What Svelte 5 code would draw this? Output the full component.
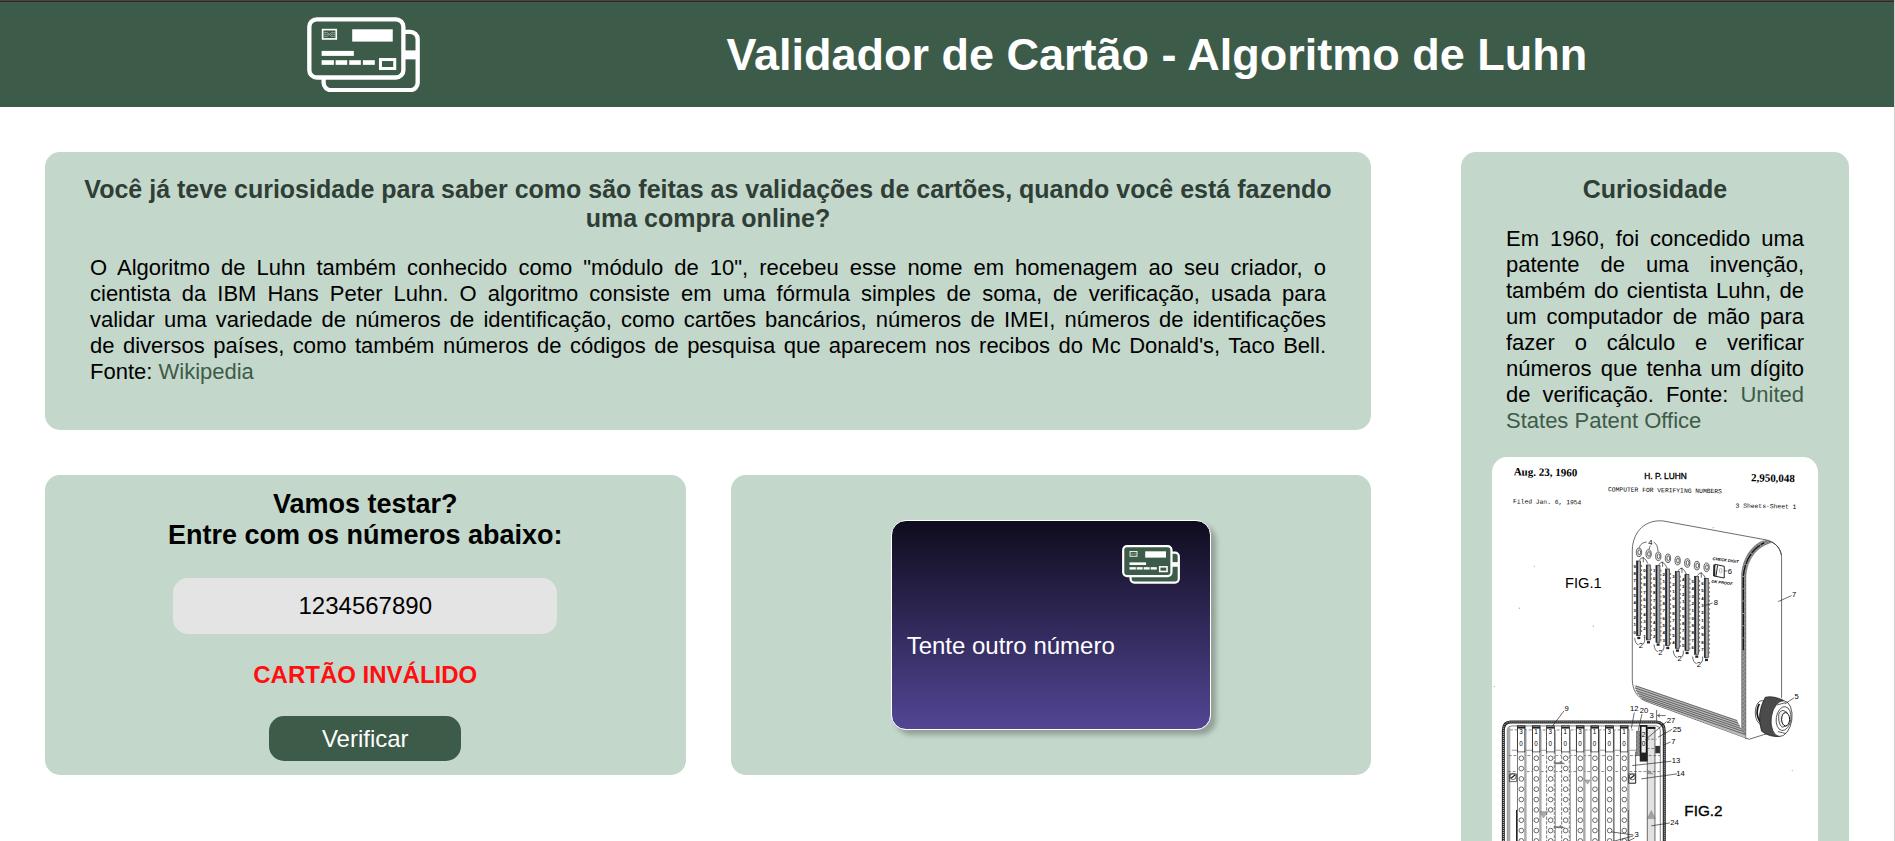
<script>
  let number = $state('1234567890');
  let valid = $state(false);

  function luhn(value) {
    const digits = value.replace(/\D/g, '').split('').reverse().map(Number);
    if (digits.length < 13) return false;
    const sum = digits.reduce((acc, d, i) => {
      if (i % 2 === 0) return acc + d;
      return acc + (d * 2 > 9 ? d * 2 - 9 : d * 2);
    }, 0);
    return sum % 10 === 0;
  }

  function verify(event) {
    event.preventDefault();
    valid = luhn(number);
  }

  // Fig. 1: digit sliders, each with its dial, top and bottom
  const sliders = [
    { x: 476, dial: 307, top: 333, end: 557 },
    { x: 505, dial: 312, top: 345, end: 570 },
    { x: 534, dial: 319, top: 347, end: 577 },
    { x: 563, dial: 325, top: 357, end: 587 },
    { x: 592, dial: 332, top: 365, end: 595 },
    { x: 621, dial: 339, top: 373, end: 602 },
    { x: 650, dial: 347, top: 379, end: 613 },
    { x: 679, dial: 352, top: 385, end: 623 }
  ];
  const scale = [0, 1, 2, 3, 4, 5, 6, 7, 8, 9];
  const pairs = [0, 2, 4, 6];

  // Fig. 2: strips and their holes
  const strips = [123, 168, 211, 256, 300, 344, 388, 432];
  const holes = Array.from({ length: 14 }, (_, i) => 925 + i * 31);

  const labels = [
    [511, 284, '4'], [750, 371, '6'], [708, 466, '8'], [943, 442, '7'],
    [950, 747, '5'], [260, 782, '9'], [463, 783, '12'], [492, 790, '20'],
    [515, 804, '3'], [573, 820, '27'], [591, 847, '25'], [580, 881, '7'],
    [588, 938, '13'], [602, 979, '14'], [584, 1126, '24'], [470, 1161, '3']
  ];
</script>

{#snippet cards(cls)}
  <svg class={cls} viewBox="48 50 340 227" aria-hidden="true">
    <g fill="#3d5b49" stroke="#fff" stroke-width="13">
      <rect x="98" y="95" width="283" height="175" rx="22" />
      <path d="M338 164H382" stroke-width="27" />
      <rect x="55" y="57" width="283" height="175" rx="22" />
    </g>
    <g fill="#fff">
      <rect x="184" y="87" width="122" height="37" />
      <rect x="92" y="152" width="97" height="15" />
      <rect x="92" y="180" width="37" height="14" />
      <rect x="134" y="180" width="35" height="14" />
      <rect x="175" y="180" width="35" height="14" />
      <rect x="216" y="180" width="36" height="14" />
    </g>
    <g fill="none" stroke="#fff">
      <rect x="95" y="88" width="41" height="28" stroke-width="5" />
      <rect x="269" y="178" width="43" height="27" stroke-width="9" />
      <path
        d="M98 97H110L115 102L110 108H98M133 97H121L116 102L121 108H133M98 102H112M119 102H133"
        stroke-width="2"
        opacity="0.6"
      />
    </g>
  </svg>
{/snippet}

<div class="page">
  <header>
    {@render cards('logo')}
    <h1>Validador de Cartão - Algoritmo de Luhn</h1>
  </header>

  <main>
    <div class="content">
      <section class="panel">
        <h2>
          Você já teve curiosidade para saber como são feitas as validações de cartões, quando você está fazendo
          uma compra online?
        </h2>
        <p class="text">
          O Algoritmo de Luhn também conhecido como "módulo de 10", recebeu esse nome em homenagem ao seu
          criador, o cientista&nbsp;da IBM Hans Peter Luhn. O algoritmo consiste em uma fórmula simples de soma, de
          verificação, usada para validar&nbsp;uma variedade de números de identificação, como cartões bancários,
          números de IMEI, números de identificações de&nbsp;diversos países, como também números de códigos de
          pesquisa que aparecem nos recibos do Mc Donald's, Taco Bell. Fonte:&nbsp;<a href="#wikipedia">Wikipedia</a>
        </p>
      </section>

      <div class="row">
        <form class="panel" onsubmit={verify}>
          <label for="number">Vamos testar?<br />Entre com os números abaixo:</label>
          <input id="number" type="text" inputmode="numeric" bind:value={number} />
          <p class="status" class:valid role="status">{valid ? 'CARTÃO VÁLIDO' : 'CARTÃO INVÁLIDO'}</p>
          <button type="submit">Verificar</button>
        </form>

        <section class="panel preview">
          <div class="card">
            {@render cards('brand')}
            <p>{valid ? number : 'Tente outro número'}</p>
          </div>
        </section>
      </div>
    </div>

    <aside class="panel">
      <h2>Curiosidade</h2>
      <p class="text">
        Em 1960, foi concedido uma patente de uma invenção, também do cientista Luhn, de um computador de mão
        para fazer o cálculo e verificar números que tenha um dígito de verificação. Fonte:
        <a href="#patent">United States Patent Office</a>
      </p>

      <svg class="patent" viewBox="36 21 978 1380" role="img" aria-labelledby="patent-name">
        <defs>
          <pattern id="hatch" width="4" height="4" patternUnits="userSpaceOnUse">
            <rect width="4" height="4" fill="#aaa" />
            <path d="M0 4L4 0" stroke="#333" />
          </pattern>
          <pattern id="knurl" width="5" height="5" patternUnits="userSpaceOnUse">
            <rect width="5" height="5" fill="#222" />
            <path d="M0 5L5 0M0 0L5 5" stroke="#888" />
          </pattern>
        </defs>
        <g class="serif">
          <text x="101" y="76" font-size="33" transform="rotate(1 101 76)">Aug. 23, 1960</text>
          <text x="813" y="94" font-size="33" transform="rotate(1 813 94)">2,950,048</text>
        </g>
        <text id="patent-name" x="493" y="88" font-size="25" stroke="#000">H. P. LUHN</text>
        <g class="mono">
          <text x="384" y="124" font-size="19" transform="rotate(1 384 124)">COMPUTER FOR VERIFYING NUMBERS</text>
          <text x="99" y="160" font-size="19" transform="rotate(1 99 160)">Filed Jan. 6, 1954</text>
          <text x="767" y="173" font-size="19" transform="rotate(1 767 173)">3 Sheets-Sheet 1</text>
        </g>
        <text x="255" y="413" font-size="44">FIG.1</text>
        <text x="613" y="1099" font-size="46" stroke="#000">FIG.2</text>

        <!-- Fig. 1: casing -->
        <g fill="none" stroke="#222" stroke-width="2">
          <path d="M457 690V300C459 240 500 208 550 213L860 270C890 277 905 300 905 325V745" />
          <path d="M457 690C458 720 470 740 495 753L808 868L865 850" />
          <path d="M855 272C885 275 898 290 905 315" />
        </g>
        <path
          d="M785 815V370C789 325 815 285 850 272L873 278C830 290 800 330 798 380V868L785 845Z"
          fill="url(#hatch)"
          stroke="#222"
        />
        <path d="M790 600V380C794 330 820 292 853 279" fill="none" stroke="#111" stroke-width="4" stroke-dasharray="34 3" />
        <path d="M463 705L772 812Q780 835 800 865L497 752Q470 738 463 705Z" fill="#bbb" />
        <g fill="none" stroke="#333" stroke-width="2">
          <path d="M468 708L772 812" />
          <path d="M465 714L776 820" />
          <path d="M467 722L780 828" />
          <path d="M472 730L784 836" />
          <path d="M478 738L788 844" />
          <path d="M486 746L794 853" />
        </g>

        <!-- Fig. 1: knob -->
        <g stroke="#111" stroke-width="2">
          <ellipse cx="846" cy="788" rx="20" ry="36" fill="#fff" />
          <path d="M838 762Q824 788 840 816" fill="none" stroke-width="5" />
          <path d="M856 742Q880 736 912 752L900 860Q868 862 845 844Q828 790 856 742Z" fill="url(#knurl)" />
          <ellipse cx="905" cy="806" rx="31" ry="54" fill="#fff" transform="rotate(8 905 806)" />
          <ellipse cx="911" cy="806" rx="22" ry="36" fill="none" transform="rotate(8 911 806)" />
          <path d="M896 800Q895 785 909 781L921 787V827L907 832Q896 825 896 800Z" fill="#eee" />
          <ellipse cx="917" cy="808" rx="12" ry="20" fill="#fff" stroke-width="3" />
          <path d="M892 765L917 758M894 845L918 851" fill="none" />
        </g>

        <!-- Fig. 1: sliders -->
        {#each sliders as s}
          <g stroke="#222" stroke-width="2">
            <ellipse cx={s.x + 1} cy={s.dial} rx="8" ry="13" fill="#ddd" />
            <ellipse cx={s.x + 2} cy={s.dial} rx="4" ry="7" fill="#fff" />
            <rect x={s.x - 6} y={s.top} width="12" height={s.end - s.top} fill="#aaa" />
            <path d="M{s.x - 4} {s.top}V{s.end}" stroke-width="4" />
            <path d="M{s.x + 9} {s.top + 12}V{s.end - 4}" stroke-dasharray="6 7" />
            <path d="M{s.x - 4} {s.end + 7}H{s.x + 5}" stroke-width="7" />
          </g>
        {/each}
        <g class="digits">
          {#each sliders as s, i}
            {#each scale as n}
              <text x={s.x - 15} y={s.top + 20 + n * 22}>{(9 - n + i) % 10}</text>
            {/each}
          {/each}
        </g>
        {#each pairs as p}
          <path
            d="M{sliders[p].x + 2} {sliders[p].top - 2}Q{sliders[p].x + 14} {sliders[p].top - 22} {sliders[p].x + 28} {sliders[p].top + 8}M{sliders[p].x + 14} {sliders[p].top - 12}V{sliders[p].top + 4}"
            class="lead"
          />
          <path
            d="M{sliders[p].x - 12} {sliders[p].end + 7}Q{sliders[p].x - 10} {sliders[p].end + 26} {sliders[p].x} {sliders[p].end + 28}M{sliders[p].x + 14} {sliders[p].end + 26}Q{sliders[p].x + 20} {sliders[p].end + 18} {sliders[p].x + 18} {sliders[p].end + 7}"
            class="lead"
          />
          <text x={sliders[p].x + 7} y={sliders[p].end + 38} class="ref">2</text>
        {/each}
        <g class="lead">
          <path d="M500 276Q482 278 478 293M511 287L507 298M521 276Q534 284 534 304" />
          <path d="M733 363H742M676 466L698 459M895 455L935 437M942 744L915 762" />
        </g>
        <g stroke="#222" stroke-width="3" fill="none">
          <path d="M705 343L733 349V384L701 378ZM713 346L708 379" />
          <ellipse cx="722" cy="362" rx="4" ry="7" stroke-width="1" />
          <path d="M703 344V378" stroke-width="6" />
        </g>
        <g class="tag">
          <text x="698" y="330" transform="rotate(7 698 330)">CHECK DIGIT</text>
          <text x="694" y="398" transform="rotate(7 694 398)">OK PROOF</text>
        </g>

        <!-- Fig. 2: open case -->
        <g fill="none">
          <path d="M70 1401V842Q70 816 92 816H530Q553 818 553 844V1401" stroke="#222" stroke-width="9" />
          <path d="M70 1401V842Q70 816 92 816H530Q553 818 553 844V1401" stroke="#ddd" stroke-width="3" stroke-dasharray="3 3" />
          <path d="M82 1401V838Q84 828 96 828H530Q541 830 541 842V1401" stroke="#444" stroke-width="2" />
        </g>
        <path d="M87 832V1401" stroke="#aaa" stroke-width="8" />
        <rect x="502" y="832" width="23" height="569" fill="#e2e2e2" />
        <g fill="none" stroke="#222" stroke-width="2">
          <path d="M502 832V1401M525 832V1401" />
          <path d="M90 840H460M86 917H540M84 965H540M500 868H530M500 896H530" stroke-dasharray="9 5" stroke="#555" />
          <path d="M95 901H480" stroke="#666" />
          <path d="M446 905V1000H467V905" />
          <path d="M110 1080V1401M445 1080V1401" stroke-width="4" />
        </g>
        <rect x="469" y="845" width="12" height="72" fill="url(#hatch)" stroke="#222" />
        <rect x="482" y="828" width="18" height="104" fill="#eee" stroke="#111" stroke-width="5" />
        <rect x="480" y="908" width="22" height="26" fill="#222" />
        <rect x="526" y="888" width="14" height="22" fill="#333" />
        <path d="M502 834H526" stroke="#111" stroke-width="6" />

        {#each strips as x, i}
          <rect x={x - 11} y="828" width="23" height="573" fill="#fff" stroke="#333" stroke-width="2" stroke-dasharray={i === 2 || i === 3 ? '10 4' : 'none'} />
          <rect x={x - 11} y="828" width="23" height="78" fill={i === 2 || i === 3 ? '#fff' : 'none'} stroke="#222" stroke-width="2" />
          <path d="M{x - 11} 833H{x + 12}" stroke="#222" stroke-width="6" />
          <path d="M{x + 15} 840V1401" stroke="#999" stroke-width="3" />
          <g class="strip">
            <text {x} y="853">{i % 2 ? 1 : 3}</text>
            <text {x} y="887">0</text>
          </g>
          {#each holes as y}
            <circle cx={x + 1} cy={y} r="7" fill="#fff" stroke="#222" stroke-width="2" />
          {/each}
        {/each}
        <g class="strip">
          <text x="491" y="862">2</text>
          <text x="491" y="887">0</text>
        </g>
        <g fill="none" stroke="#222" stroke-width="2">
          <path d="M88 972H110V995H88ZM446 972H467V1000H446Z" />
          <circle cx="99" cy="980" r="9" />
          <circle cx="457" cy="981" r="9" />
          <path d="M93 985L105 975M451 986L463 976" stroke-width="4" />
        </g>
        <g fill="#888" stroke="#444">
          <path d="M223 938H240V934L254 942H223ZM223 1130H240V1126L254 1134H223Z" />
          <path d="M180 1085H204L190 1105ZM314 990H331L323 1003ZM502 960L520 972H502ZM502 1106L514 1082L526 1106Z" opacity="0.7" />
        </g>
        <g class="lead">
          <path d="M252 783L216 830M463 788L454 836M486 792L474 845M530 780V812M533 797H557M540 792L533 797L540 802" />
          <path d="M560 815L496 870M577 838L534 862M572 876L550 886M574 934L457 947M591 972L484 987M570 1119L514 1128" />
          <path d="M394 1146L460 1155M394 1176L460 1158M440 1176L464 1164" />
        </g>
        {#each labels as [x, y, t]}
          <text {x} {y} class="ref">{t}</text>
        {/each}
        <g fill="#aaa">
          <circle cx="163" cy="349" r="2" />
          <circle cx="118" cy="475" r="2" />
          <circle cx="340" cy="529" r="2" />
          <circle cx="43" cy="710" r="2" />
          <circle cx="700" cy="233" r="2" />
          <circle cx="937" cy="962" r="2" />
        </g>
      </svg>
    </aside>
  </main>
</div>

<style>
  :global(body) {
    background: #fff;
  }

  .page {
    border-right: 1px solid #d0d0d0;
    font-family: 'Liberation Sans', Arial, sans-serif;
    color: #000;
  }

  h1,
  h2,
  p {
    margin: 0;
  }

  header {
    display: flex;
    align-items: center;
    justify-content: space-evenly;
    box-sizing: border-box;
    min-height: 107px;
    padding-top: 2px;
    background: linear-gradient(#4a403e 1px, #2c2a29 1px, #2c2a29 2px, #3d5b49 2px);
    color: #fff;
  }

  .logo {
    width: 113px;
  }

  h1 {
    font-size: 45px;
    line-height: 52px;
  }

  main {
    display: grid;
    grid-template-columns: minmax(0, 1326fr) minmax(0, 388fr);
    gap: 90px;
    align-items: start;
    padding: 45px;
  }

  .content {
    display: grid;
    gap: 45px;
  }

  .row {
    display: grid;
    grid-template-columns: 1fr 1fr;
    gap: 45px;
  }

  .panel {
    border-radius: 15px;
    background: #c4d7cb;
  }

  h2 {
    padding: 23px 15px 0;
    color: #2f3e36;
    font-size: 25px;
    line-height: 29px;
    text-align: center;
  }

  .text {
    padding: 22px 45px 45px;
    font-size: 22px;
    line-height: 26px;
    text-align: justify;
  }

  a {
    color: #3d5b49;
    text-decoration: none;
  }

  form {
    display: flex;
    flex-direction: column;
    align-items: center;
    padding: 14px 0;
    font-size: 24px;
  }

  label {
    font-size: 27px;
    font-weight: bold;
    line-height: 31px;
    text-align: center;
  }

  input {
    box-sizing: border-box;
    width: 60%;
    height: 56px;
    margin: 27px 0;
    border: 0;
    border-radius: 15px;
    background: #e4e4e4;
    color: #000;
    font: inherit;
    text-align: center;
  }

  .status {
    color: #ff0f0f;
    font-weight: bold;
    line-height: 28px;
  }

  .status.valid {
    color: #3d5b49;
  }

  button {
    width: 30%;
    height: 45px;
    margin-top: 27px;
    padding: 0;
    border: 0;
    border-radius: 15px;
    background: #3d5b49;
    color: #fff;
    font: inherit;
  }

  .preview {
    display: flex;
    align-items: center;
    justify-content: center;
  }

  .card {
    display: flex;
    flex-direction: column;
    box-sizing: border-box;
    width: 50%;
    height: 210px;
    padding: 24px 15px;
    border: 1px solid #fff;
    border-radius: 15px;
    background: linear-gradient(#0f0c1e, #524694);
    box-shadow: 5px 5px 5px rgba(0, 0, 0, 0.25);
    color: #fff;
    font-size: 24px;
    line-height: 28px;
  }

  .brand {
    align-self: flex-end;
    width: 58px;
    margin: 0 15px 48px 0;
  }

  aside .text {
    padding-bottom: 23px;
  }

  .patent {
    display: block;
    width: 84%;
    margin: 0 auto 45px;
    border-radius: 15px;
    background: #fff;
  }

  .serif {
    font-family: 'Liberation Serif', 'Times New Roman', serif;
    font-weight: bold;
  }

  .mono {
    font-family: 'Liberation Mono', 'Courier New', monospace;
  }

  .lead {
    fill: none;
    stroke: #222;
    stroke-width: 2px;
  }

  .ref {
    font-size: 23px;
    text-anchor: middle;
  }

  .digits {
    font-size: 13px;
    font-weight: bold;
  }

  .strip {
    font-size: 19px;
    text-anchor: middle;
  }

  .tag {
    font-size: 12px;
    font-style: italic;
    font-weight: bold;
  }
</style>
